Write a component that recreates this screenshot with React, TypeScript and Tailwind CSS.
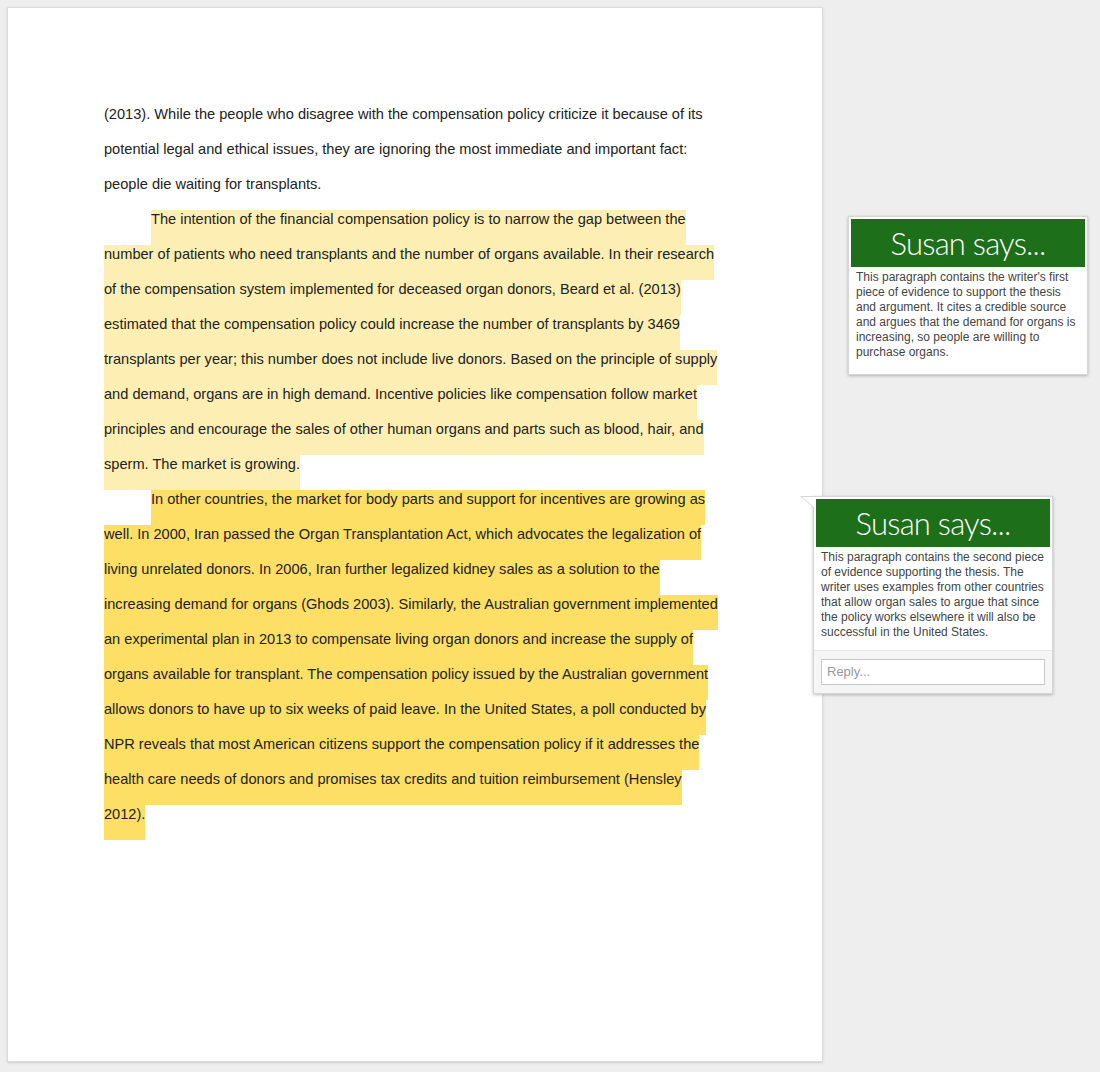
import React from "react";

const p0 = [
  "(2013). While the people who disagree with the compensation policy criticize it because of its",
  "potential legal and ethical issues, they are ignoring the most immediate and important fact:",
  "people die waiting for transplants.",
];
const p1 = [
  "The intention of the financial compensation policy is to narrow the gap between the",
  "number of patients who need transplants and the number of organs available. In their research",
  "of the compensation system implemented for deceased organ donors, Beard et al. (2013)",
  "estimated that the compensation policy could increase the number of transplants by 3469",
  "transplants per year; this number does not include live donors. Based on the principle of supply",
  "and demand, organs are in high demand. Incentive policies like compensation follow market",
  "principles and encourage the sales of other human organs and parts such as blood, hair, and",
  "sperm. The market is growing.",
];
const p2 = [
  "In other countries, the market for body parts and support for incentives are growing as",
  "well. In 2000, Iran passed the Organ Transplantation Act, which advocates the legalization of",
  "living unrelated donors. In 2006, Iran further legalized kidney sales as a solution to the",
  "increasing demand for organs (Ghods 2003). Similarly, the Australian government implemented",
  "an experimental plan in 2013 to compensate living organ donors and increase the supply of",
  "organs available for transplant. The compensation policy issued by the Australian government",
  "allows donors to have up to six weeks of paid leave. In the United States, a poll conducted by",
  "NPR reveals that most American citizens support the compensation policy if it addresses the",
  "health care needs of donors and promises tax credits and tuition reimbursement (Hensley",
  "2012).",
];

function Lines({ lines, bg }: { lines: string[]; bg?: string }) {
  return (
    <>
      {lines.map((l, i) => (
        <div key={i} className="h-[35px] whitespace-nowrap">
          <span
            className={`inline-block h-[35px] leading-[18px] ${i === 0 ? "ml-[47px]" : ""}`}
            style={bg ? { background: bg } : undefined}
          >
            {l}
          </span>
        </div>
      ))}
    </>
  );
}

function Header() {
  return (
    <div className="bg-[#1d6f1a] h-[48px] flex items-center justify-center text-white text-[31px] font-light tracking-tight" style={{ fontFamily: "Lato, 'Open Sans', sans-serif" }}>
      Susan says...
    </div>
  );
}

export default function App() {
  return (
    <div className="bg-[#eeeeee] w-[1100px] h-[1072px] relative overflow-hidden" style={{ fontFamily: "'Liberation Sans', Arial, sans-serif" }}>
      <div className="absolute left-[7px] top-[7px] w-[816px] h-[1055px] bg-white border border-[#dcdcdc] shadow-sm">
        <div className="pl-[96px] pt-[96px] text-[14.6px] text-[#222]">
          <div className="[&>div:first-child>span]:ml-0">
            {p0.map((l, i) => (
              <div key={i} className="h-[35px] whitespace-nowrap">
                <span className="inline-block h-[35px] leading-[18px]">{l}</span>
              </div>
            ))}
          </div>
          <Lines lines={p1} bg="#fdefb3" />
          <Lines lines={p2} bg="#fddf66" />
        </div>
      </div>

      <div className="absolute left-[848px] top-[216px] w-[240px] bg-white border border-[#d6d6d6] shadow-[0_1px_3px_rgba(0,0,0,0.25)] p-[2px] pb-[14px]">
        <Header />
        <div className="px-[5px] pt-[3px] text-[12px] leading-[15px] text-[#444]">
          This paragraph contains the writer's first piece of evidence to support the thesis and argument. It cites a credible source and argues that the demand for organs is increasing, so people are willing to purchase organs.
        </div>
      </div>

      <div className="absolute left-[813px] top-[496px] w-[240px] bg-white border border-[#d6d6d6] shadow-[0_1px_3px_rgba(0,0,0,0.25)]">
        <div className="absolute -left-[14px] -top-[1px] w-0 h-0 border-t-[12px] border-t-[#d6d6d6] border-l-[14px] border-l-transparent" />
        <div className="absolute -left-[12px] top-0 w-0 h-0 border-t-[10px] border-t-white border-l-[12px] border-l-transparent" />
        <div className="p-[2px]">
          <Header />
          <div className="px-[5px] pt-[3px] pb-[8px] text-[12px] leading-[15px] text-[#444]">
            This paragraph contains the second piece of evidence supporting the thesis. The writer uses examples from other countries that allow organ sales to argue that since the policy works elsewhere it will also be successful in the United States.
          </div>
        </div>
        <div className="bg-[#f5f5f5] border-t border-[#e5e5e5] px-[7px] py-[8px]">
          <div className="bg-white border border-[#c8c8c8] h-[26px] px-[5px] flex items-center text-[13px] text-[#999]">Reply...</div>
        </div>
      </div>
    </div>
  );
}
